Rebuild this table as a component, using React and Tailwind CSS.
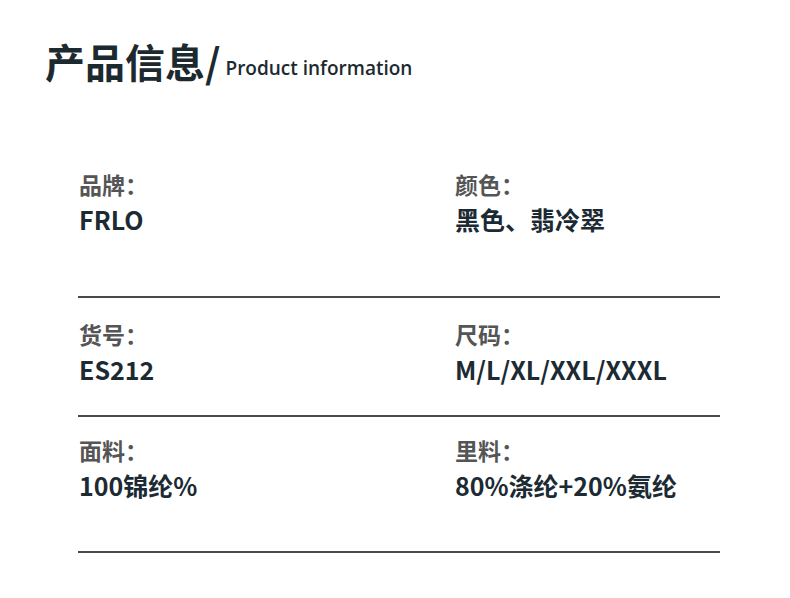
import React from "react";

const rows = [
  {
    items: [
      { label: "品牌：", value: "FRLO" },
      { label: "颜色：", value: "黑色、翡冷翠" },
    ],
    pad: "pt-0 pb-[60px]",
  },
  {
    items: [
      { label: "货号：", value: "ES212" },
      { label: "尺码：", value: "M/L/XL/XXL/XXXL" },
    ],
    pad: "pt-[20px] pb-[29px]",
  },
  {
    items: [
      { label: "面料：", value: "100锦纶%" },
      { label: "里料：", value: "80%涤纶+20%氨纶" },
    ],
    pad: "pt-[17px] pb-[49px]",
  },
];

export default function App() {
  return (
    <div
      className="h-[598px] w-[790px] bg-white"
      style={{ fontFamily: '"Noto Sans CJK SC", "Noto Sans", sans-serif' }}
    >
      {/* Title */}
      <div className="flex items-end pl-[45px] pt-[36px]">
        <span className="text-[40px] font-bold leading-[50px] text-[#1c2a30]">
          产品信息/
        </span>
        <span
          className="mb-[6px] ml-[5px] text-[19px] font-semibold leading-[24px] text-[#1c2a30]"
          style={{ fontFamily: '"Open Sans", "Noto Sans", sans-serif' }}
        >
          Product information
        </span>
      </div>

      {/* Info table */}
      <div className="ml-[78px] mt-[82px] w-[642px]">
        {rows.map((row, i) => (
          <div
            key={i}
            className={`grid grid-cols-[376px_1fr] border-b-2 border-[#4a4a4a] ${row.pad}`}
          >
            {row.items.map((it) => (
              <div key={it.label} className="pl-[1px]">
                <div className="text-[23px] font-bold leading-[32px] text-[#555555]">
                  {it.label}
                </div>
                <div className="mt-[2px] text-[25px] font-bold leading-[34px] text-[#1c2a33]">
                  {it.value}
                </div>
              </div>
            ))}
          </div>
        ))}
      </div>
    </div>
  );
}
